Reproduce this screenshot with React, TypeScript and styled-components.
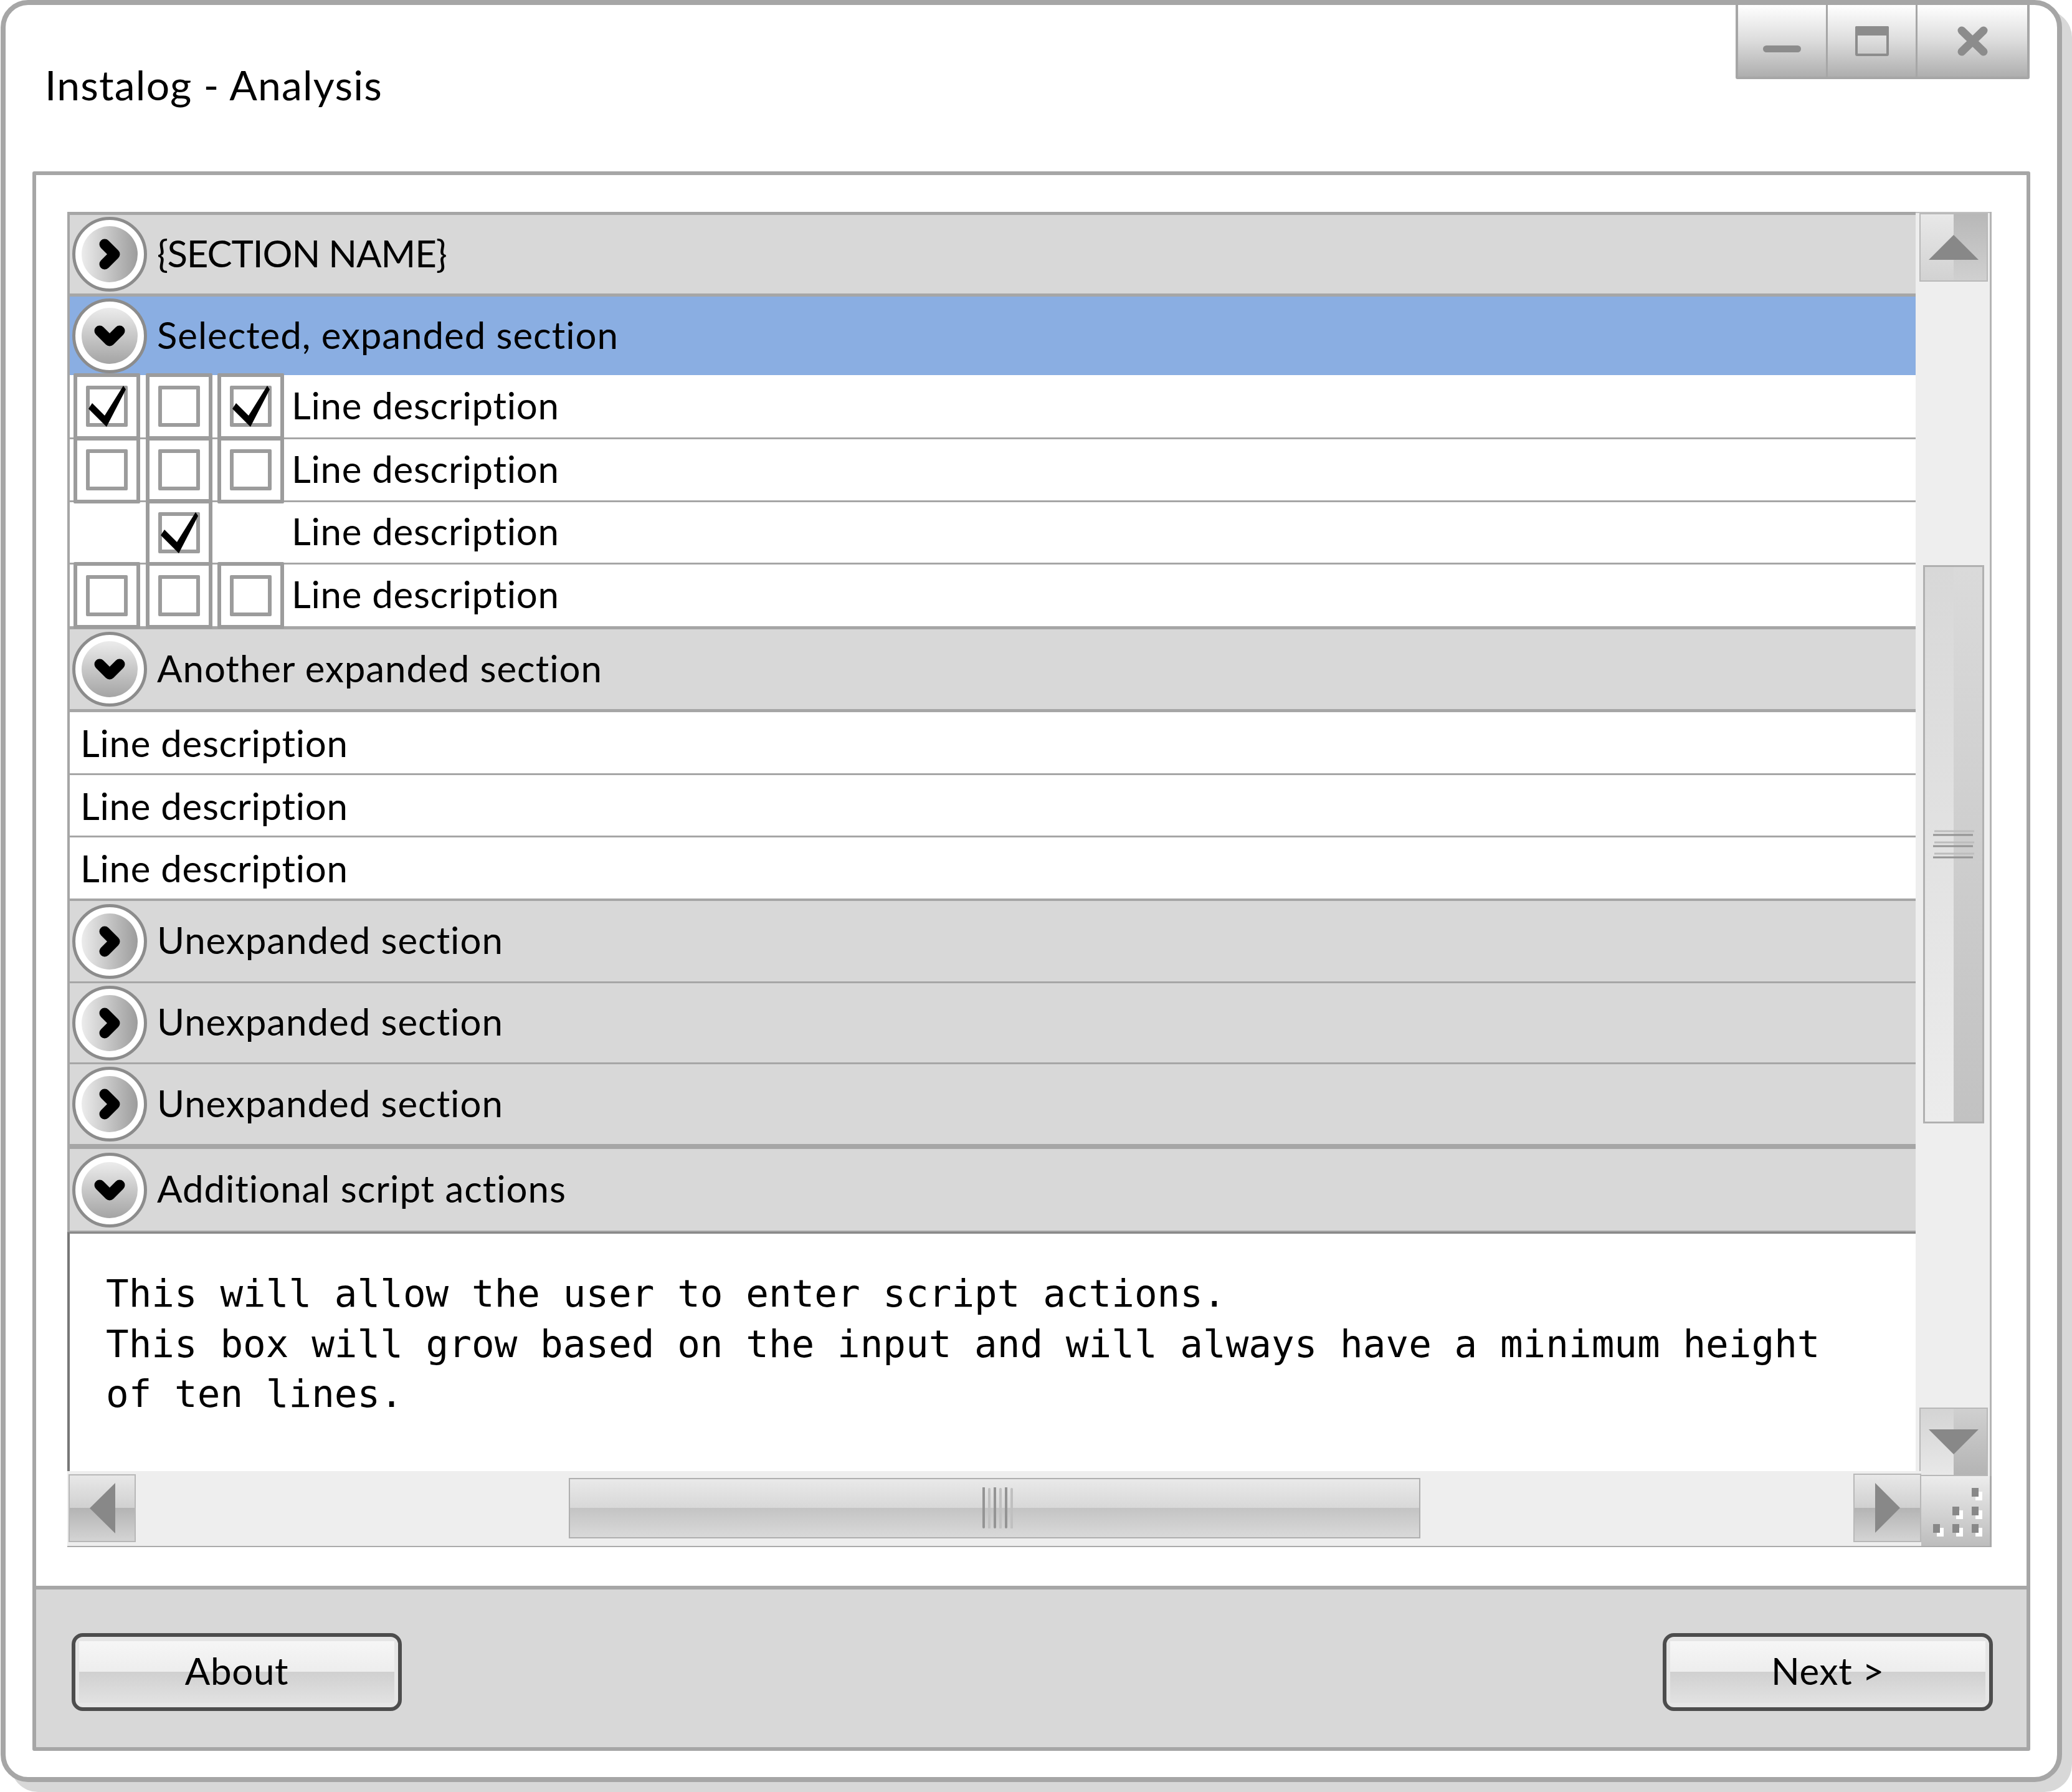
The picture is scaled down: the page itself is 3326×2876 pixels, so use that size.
import styled, { createGlobalStyle } from 'styled-components';

const LINE = '#a6a6a6';
const ICON = '#8c8c8c';
const ARROW = '#888888';

const GlobalStyle = createGlobalStyle`
    html, body {
        margin: 0;
        padding: 0;
        background: #fff;
    }

    * {
        box-sizing: border-box;
    }

    body {
        font-family: Lato, "Open Sans", sans-serif;
        font-variant-ligatures: none;
        color: #000;
    }
`

const Page = styled.div`
    width: 3326px;
    height: 2876px;
    padding-left: 1px;
    overflow: hidden;
`

const Window = styled.div`
    position: relative;
    display: flex;
    flex-direction: column;
    width: 3309px;
    height: 2860px;
    padding: 0 43px 42px;
    background: #fff;
    border: 8px solid ${LINE};
    border-radius: 44px;
    box-shadow: 16px 16px 0 0 #d8d8d8;
`

const TitleBar = styled.div`
    height: 267px;
    padding: 91px 0 0 20px;
    font-size: 66px;
    letter-spacing: 1.2px;
    line-height: 74px;
`

const WindowControls = styled.div`
    position: absolute;
    top: -8px;
    right: 44px;
    display: flex;
    height: 127px;
    gap: 3px;
    background: ${LINE};
    border: 4px solid ${LINE};
    border-top-width: 8px;
    border-radius: 0 0 3px 3px;
`

const WindowButton = styled.div<{ $wide?: boolean }>`
    display: flex;
    align-items: center;
    justify-content: center;
    width: ${(p) => (p.$wide ? 176 : 141)}px;
    background: linear-gradient(#ffffff, #dcdcdc 50%, #aeaeae);
`

const Panel = styled.div`
    display: flex;
    flex-direction: column;
    height: 2535px;
    border: 6px solid ${LINE};
    border-radius: 3px;
`

const PanelBody = styled.div`
    height: 2270px;
    padding: 59px 0 0 50px;
    border-bottom: 6px solid ${LINE};
`

const ListFrame = styled.div`
    display: grid;
    width: 3089px;
    grid-template-columns: 2967px 9px 113px;
    grid-template-rows: 2021px 8px 114px;
`

const Content = styled.div`
    grid-column: 1;
    grid-row: 1;
    border-top: 5px solid ${LINE};
`

const SectionRow = styled.div<{ $height: number; $selected?: boolean; $top?: number; $bottom?: number }>`
    display: flex;
    align-items: center;
    gap: 16px;
    height: ${(p) => p.$height}px;
    padding-left: 4px;
    font-size: 60px;
    background: ${(p) => (p.$selected ? '#8aaee2' : '#d8d8d8')};
    border-left: 4px solid ${LINE};
    border-top: ${(p) => p.$top ?? 0}px solid ${LINE};
    border-bottom: ${(p) => p.$bottom ?? 0}px solid ${LINE};
`

const SectionLabel = styled.span<{ $caps?: boolean }>`
    padding-bottom: 5px;
    letter-spacing: ${(p) => (p.$caps ? -1.1 : 0.95)}px;
`

const Expander = styled.div`
    flex: none;
    width: 120px;
    height: 120px;
    padding: 10px;
    background: #fff;
    border: 5px solid ${ICON};
    border-radius: 50%;
`

const ExpanderFace = styled.div<{ $open?: boolean }>`
    display: flex;
    align-items: center;
    justify-content: center;
    width: 100%;
    height: 100%;
    border-radius: 50%;
    background: ${(p) =>
        p.$open
            ? 'linear-gradient(180deg, #ececec, #a4a4a4)'
            : 'linear-gradient(90deg, #ececec, #9c9c9c)'};
`

const LineRow = styled.div<{ $height: number; $last?: boolean }>`
    display: flex;
    align-items: center;
    height: ${(p) => p.$height}px;
    padding-left: 6px;
    font-size: 60px;
    letter-spacing: 0.7px;
    background: #fff;
    border-left: 4px solid ${LINE};
    border-bottom: ${(p) => (p.$last ? 0 : 3)}px solid ${LINE};
`

const PlainLabel = styled.span`
    padding-left: 11px;
`

const CheckLabel = styled.span`
    padding-bottom: 5px;
`

const CheckColumns = styled.div`
    display: grid;
    grid-template-columns: 107px 107px 107px;
    column-gap: 8.5px;
    margin-right: 12px;
`

const CheckCell = styled.div<{ $empty?: boolean }>`
    display: flex;
    align-items: center;
    justify-content: center;
    height: 107px;
    border: 6px solid ${(p) => (p.$empty ? 'transparent' : '#9c9c9c')};
    border-radius: 2px;
`

const CheckBox = styled.div`
    position: relative;
    width: 67px;
    height: 66px;
    border: 6px solid #9c9c9c;
    border-radius: 2px;
`

const CheckMark = styled.svg`
    position: absolute;
    top: -6px;
    left: -6px;
`

const ScriptArea = styled.div`
    height: 384px;
    padding: 56px 0 0 58px;
    font-family: "DejaVu Sans Mono", "Liberation Mono", monospace;
    font-size: 60.95px;
    line-height: 80.5px;
    white-space: pre;
    background: #fff;
    border-left: 4px solid #777;
    border-top: 3px solid #8a8a8a;
`

const VScroll = styled.div`
    grid-column: 2 / 4;
    grid-row: 1 / 3;
    display: flex;
    flex-direction: column;
    align-items: center;
    padding-top: 2px;
    background: #eeeeee;
    box-shadow: inset -3px 0 0 #b4b4b4, inset 0 2px 0 #c0c0c0;
`

const ScrollButton = styled.div<{ $w: number; $h: number; $bg: string }>`
    display: flex;
    flex: none;
    align-items: center;
    justify-content: center;
    width: ${(p) => p.$w}px;
    height: ${(p) => p.$h}px;
    background: ${(p) => p.$bg};
    border: 2px solid #b8b8b8;
`

const DownButton = styled(ScrollButton)`
    margin-top: auto;
`

const UP_BG =
    'linear-gradient(#b8b8b8, #d0d0d0) right / 50% 100% no-repeat, linear-gradient(#e8e8e8, #d2d2d2) left / 50% 100% no-repeat';
const DOWN_BG =
    'linear-gradient(#d0d0d0, #b4b4b4) right / 50% 100% no-repeat, linear-gradient(#d4d4d4, #e8e8e8) left / 50% 100% no-repeat';
const SIDE_BG = 'linear-gradient(#e8e8e8, #d0d0d0 50%, #b4b4b4 50%, #d4d4d4)';

const VThumb = styled.div`
    display: flex;
    flex: none;
    align-items: center;
    justify-content: center;
    width: 98px;
    height: 896px;
    margin-top: 455px;
    background:
        linear-gradient(#dadada, #c2c2c2) right / 50% 100% no-repeat,
        linear-gradient(#d8d8d8, #ececec) left / 50% 100% no-repeat;
    border: 3px solid #b0b0b0;
`

const HScroll = styled.div`
    grid-column: 1 / 3;
    grid-row: 2 / 4;
    display: flex;
    align-items: center;
    padding: 0 0 2px 2px;
    background: #eeeeee;
    border-bottom: 2px solid #aaaaaa;
`

const HThumb = styled.div`
    display: flex;
    flex: none;
    align-items: center;
    justify-content: center;
    width: 1367px;
    height: 97px;
    margin-left: 695px;
    padding-left: 10px;
    background: linear-gradient(#e9e9e9, #d8d8d8 50%, #c4c4c4 50%, #d9d9d9);
    border: 2px solid #afafaf;
`

const RightButton = styled(ScrollButton)`
    margin-left: auto;
`

const Grip = styled.div`
    grid-column: 3;
    grid-row: 3;
    background: linear-gradient(#ececec, #bcbcbc);
    box-shadow: inset -3px 0 0 #aaaaaa, inset 0 -2px 0 #aaaaaa;
`

const Footer = styled.div`
    display: flex;
    flex: 1;
    justify-content: space-between;
    padding: 70px 54px 0 57px;
    background: #d8d8d8;
`

const FooterButton = styled.div`
    display: flex;
    align-items: center;
    justify-content: center;
    width: 530px;
    height: 125px;
    padding-bottom: 5px;
    font-size: 60px;
    letter-spacing: 0.7px;
    background:
        linear-gradient(#f6f6f6, #ededed 50%, #d0d0d0 50%, #e2e2e2) center / calc(100% - 12px) calc(100% - 14px) no-repeat,
        #e6e6e6;
    border: 6px solid #4d4d4d;
    border-radius: 18px;
`

function Chevron(props: { open?: boolean }) {
    if (props.open) {
        return (
            <svg width="50" height="34" viewBox="0 0 50 34">
                <path d="M9 9 L25 25 L41 9" fill="none" stroke="#000" strokeWidth="17" strokeLinecap="round" strokeLinejoin="round" />
            </svg>
        )
    }
    return (
        <svg width="34" height="50" viewBox="0 0 34 50">
            <path d="M9 9 L25 25 L9 41" fill="none" stroke="#000" strokeWidth="17" strokeLinecap="round" strokeLinejoin="round" />
        </svg>
    )
}

function Section(props: { label: string; height: number; open?: boolean; selected?: boolean; caps?: boolean; top?: number; bottom?: number }) {
    return (
        <SectionRow $height={props.height} $selected={props.selected} $top={props.top} $bottom={props.bottom}>
            <Expander>
                <ExpanderFace $open={props.open}>
                    <Chevron open={props.open} />
                </ExpanderFace>
            </Expander>
            <SectionLabel $caps={props.caps}>{props.label}</SectionLabel>
        </SectionRow>
    )
}

type Check = 'on' | 'off' | 'none';

function CheckSlot(props: { state: Check }) {
    if (props.state === 'none') return <CheckCell $empty />;
    return (
        <CheckCell>
            <CheckBox>
                {props.state === 'on' && (
                    <CheckMark width="67" height="66" viewBox="0 0 67 66">
                        <polygon points="60,0 64,6 33,66 4,37 10,28 30,48" fill="#000" />
                    </CheckMark>
                )}
            </CheckBox>
        </CheckCell>
    )
}

const checkRows: { height: number; checks: Check[] }[] = [
    { height: 103, checks: ['on', 'off', 'on'] },
    { height: 101, checks: ['off', 'off', 'off'] },
    { height: 100, checks: ['none', 'on', 'none'] },
    { height: 99, checks: ['off', 'off', 'off'] },
];

export default function App() {
    return (
        <Page>
            <GlobalStyle />
            <Window>
                <TitleBar>Instalog - Analysis</TitleBar>
                <WindowControls>
                    <WindowButton>
                        <svg width="61" height="48" viewBox="0 0 61 48">
                            <rect x="0" y="31" width="61" height="11" rx="5.5" fill={ICON} />
                        </svg>
                    </WindowButton>
                    <WindowButton>
                        <svg width="54" height="48" viewBox="0 0 54 48">
                            <rect x="2" y="2" width="50" height="44" rx="1" fill="none" stroke={ICON} strokeWidth="4" />
                            <rect x="0" y="0" width="54" height="15" rx="2" fill={ICON} />
                        </svg>
                    </WindowButton>
                    <WindowButton $wide>
                        <svg width="49" height="48" viewBox="0 0 49 48">
                            <path d="M7 7 L42 41 M42 7 L7 41" stroke={ICON} strokeWidth="13" strokeLinecap="round" />
                        </svg>
                    </WindowButton>
                </WindowControls>

                <Panel>
                    <PanelBody>
                        <ListFrame>
                            <Content>
                                <Section label="{SECTION NAME}" height={131} bottom={5} caps />
                                <Section label="Selected, expanded section" height={126} open selected />
                                {checkRows.map((row, i) => (
                                    <LineRow key={i} $height={row.height} $last={i === checkRows.length - 1}>
                                        <CheckColumns>
                                            {row.checks.map((state, j) => (
                                                <CheckSlot key={j} state={state} />
                                            ))}
                                        </CheckColumns>
                                        <CheckLabel>Line description</CheckLabel>
                                    </LineRow>
                                ))}
                                <Section label="Another expanded section" height={138} open top={5} bottom={5} />
                                <LineRow $height={101}><PlainLabel>Line description</PlainLabel></LineRow>
                                <LineRow $height={100}><PlainLabel>Line description</PlainLabel></LineRow>
                                <LineRow $height={98} $last><PlainLabel>Line description</PlainLabel></LineRow>
                                <Section label="Unexpanded section" height={136} top={4} bottom={3} />
                                <Section label="Unexpanded section" height={130} bottom={3} />
                                <Section label="Unexpanded section" height={131} bottom={3} />
                                <Section label="Additional script actions" height={138} open top={5} bottom={2} />
                                <ScriptArea>{'This will allow the user to enter script actions.\nThis box will grow based on the input and will always have a minimum height\nof ten lines.'}</ScriptArea>
                            </Content>

                            <VScroll>
                                <ScrollButton $w={110} $h={110} $bg={UP_BG}>
                                    <svg width="80" height="40" viewBox="0 0 80 40">
                                        <polygon points="40,0 80,40 0,40" fill={ARROW} />
                                    </svg>
                                </ScrollButton>
                                <VThumb>
                                    <svg width="66" height="46" viewBox="0 0 66 46">
                                        <path d="M2 2 H66 M2 20 H66 M2 38 H66" stroke="#bdbdbd" strokeWidth="3" />
                                        <path d="M0 8 H64 M0 26 H64 M0 44 H64" stroke="#949494" strokeWidth="3" />
                                    </svg>
                                </VThumb>
                                <DownButton $w={110} $h={110} $bg={DOWN_BG}>
                                    <svg width="80" height="40" viewBox="0 0 80 40">
                                        <polygon points="0,0 80,0 40,40" fill={ARROW} />
                                    </svg>
                                </DownButton>
                            </VScroll>

                            <HScroll>
                                <ScrollButton $w={108} $h={109} $bg={SIDE_BG}>
                                    <svg width="41" height="81" viewBox="0 0 41 81">
                                        <polygon points="0,40.5 41,0 41,81" fill={ARROW} />
                                    </svg>
                                </ScrollButton>
                                <HThumb>
                                    <svg width="50" height="66" viewBox="0 0 50 66">
                                        <path d="M2 1 V64 M20 1 V64 M38 1 V64" stroke="#949494" strokeWidth="4" strokeLinecap="round" />
                                        <path d="M11 3 V65 M29 3 V65 M47 3 V65" stroke="#c0c0c0" strokeWidth="4" strokeLinecap="round" />
                                    </svg>
                                </HThumb>
                                <RightButton $w={109} $h={110} $bg={SIDE_BG}>
                                    <svg width="40" height="80" viewBox="0 0 40 80">
                                        <polygon points="0,0 40,40 0,80" fill={ARROW} />
                                    </svg>
                                </RightButton>
                            </HScroll>

                            <Grip>
                                <svg width="113" height="113" viewBox="0 0 113 113">
                                    <path d="M87 25 h11 v14 h-11 z M87 55 h11 v14 h-11 z M56 55 h11 v14 h-11 z M87 83 h11 v14 h-11 z M56 83 h11 v14 h-11 z M25 83 h11 v14 h-11 z" fill="#fff" />
                                    <path d="M81 19 h11 v14 h-11 z M81 49 h11 v14 h-11 z M50 49 h11 v14 h-11 z M81 77 h11 v14 h-11 z M50 77 h11 v14 h-11 z M19 77 h11 v14 h-11 z" fill={ARROW} />
                                </svg>
                            </Grip>
                        </ListFrame>
                    </PanelBody>

                    <Footer>
                        <FooterButton>About</FooterButton>
                        <FooterButton>Next &gt;</FooterButton>
                    </Footer>
                </Panel>
            </Window>
        </Page>
    )
}
